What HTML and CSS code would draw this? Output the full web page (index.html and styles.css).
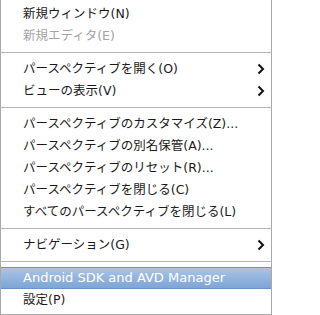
FILE: index.html
```html
<!DOCTYPE html>
<html lang="ja">
<head>
<meta charset="utf-8">
<link rel="stylesheet" href="styles.css">
</head>
<body>
<div class="menu">
  <div class="item">新規ウィンドウ(N)</div>
  <div class="item disabled">新規エディタ(E)</div>
  <div class="sep"></div>
  <div class="item sub">パースペクティブを開く(O)<svg class="chev" viewBox="0 0 8 12"><path d="M1.5 1.5 L6 6 L1.5 10.5" /></svg></div>
  <div class="item sub">ビューの表示(V)<svg class="chev" viewBox="0 0 8 12"><path d="M1.5 1.5 L6 6 L1.5 10.5" /></svg></div>
  <div class="sep"></div>
  <div class="item">パースペクティブのカスタマイズ(Z)...</div>
  <div class="item">パースペクティブの別名保管(A)...</div>
  <div class="item">パースペクティブのリセット(R)...</div>
  <div class="item">パースペクティブを閉じる(C)</div>
  <div class="item">すべてのパースペクティブを閉じる(L)</div>
  <div class="sep"></div>
  <div class="item sub">ナビゲーション(G)<svg class="chev" viewBox="0 0 8 12"><path d="M1.5 1.5 L6 6 L1.5 10.5" /></svg></div>
  <div class="sep"></div>
  <div class="item active">Android SDK and AVD Manager</div>
  <div class="item">設定(P)</div>
</div>
</body>
</html>
```
FILE: styles.css
```css
html, body {
  margin: 0;
  padding: 0;
  background: #ffffff;
}
.menu {
  width: 272px;
  height: 315px;
  box-sizing: border-box;
  border: 1px solid #a8a8a8;
  border-top: none;
  padding: 3px 0 3px 0;
  display: flex;
  flex-direction: column;
  font-family: "DejaVu Sans", "Noto Sans CJK JP", sans-serif;
  font-size: 12.5px;
  color: #1a1a1a;
  background: #ffffff;
}
.item {
  height: 22px;
  line-height: 22px;
  padding-left: 22px;
  padding-right: 6px;
  display: flex;
  align-items: center;
  justify-content: space-between;
  white-space: nowrap;
  box-sizing: border-box;
}
.disabled {
  color: #a3a3a3;
}
.sep {
  height: 11px;
  display: flex;
  align-items: center;
}
.sep::before {
  content: "";
  display: block;
  width: 100%;
  height: 1px;
  background: #b4b4b4;
}
.chev {
  width: 8px;
  height: 12px;
  fill: none;
  stroke: #111111;
  stroke-width: 2;
}
.active {
  color: #ffffff;
  font-size: 13px;
  background: linear-gradient(#a9c4e6, #7ea5d6);
  border: 1px solid #6d92c6;
  border-left: none;
  border-right: none;
  padding-left: 22px;
}
```
